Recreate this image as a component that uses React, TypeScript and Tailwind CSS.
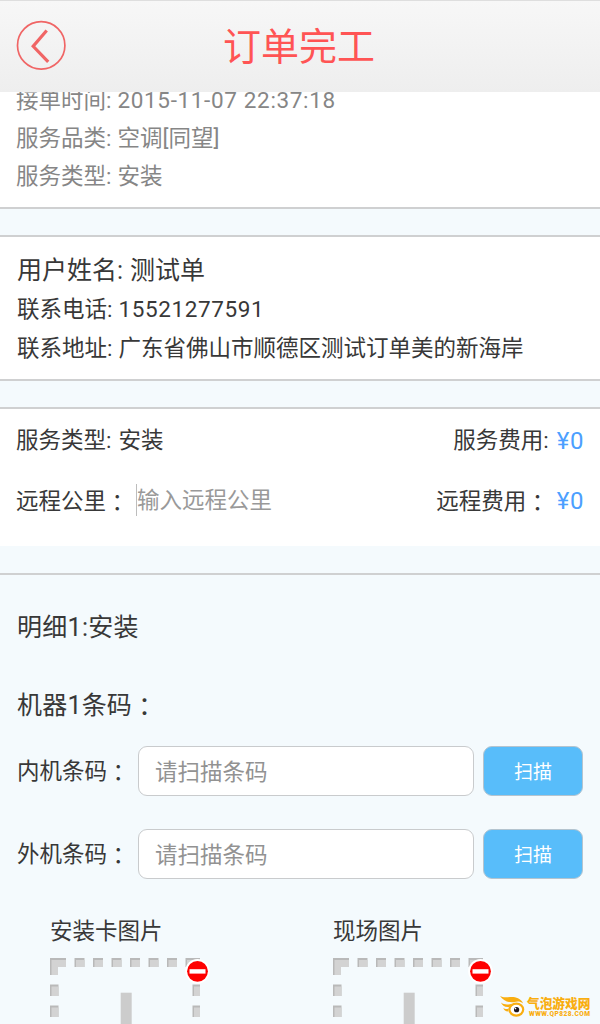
import type { ReactNode } from "react";

interface InfoRowProps {
  label: string;
  value: string;
  className?: string;
  valueClassName?: string;
}

function InfoRow({
  label,
  value,
  className = "h-[38px] text-[22.5px]",
  valueClassName = "",
}: InfoRowProps) {
  return (
    <p className={`flex items-center whitespace-nowrap ${className}`}>
      <span>{label}:</span>
      <span className={`ml-1.5 ${valueClassName}`}>{value}</span>
    </p>
  );
}

// Full-width colon, centred in its cell
function Colon() {
  return (
    <span className="inline-block translate-y-[2px] font-['Noto_Sans_CJK_TC',sans-serif]">：</span>
  );
}

function Header() {
  return (
    <header className="relative z-10 flex h-[92px] shrink-0 items-center justify-center border-t border-[#dedede] bg-linear-to-b from-[#f7f7f7] to-[#eeeeee]">
      <button type="button" aria-label="返回" className="absolute top-[19px] left-4">
        <svg width="51" height="51" viewBox="0 0 51 51" fill="none" stroke="#f06565">
          <circle cx="25.2" cy="25.4" r="23.7" strokeWidth="1.7" />
          <path d="M30.7 10.5 17.2 26.3 32.2 41.8" strokeWidth="3.2" />
        </svg>
      </button>
      <h1 className="pr-0.5 text-[38px] leading-none text-[#ff5454]">订单完工</h1>
    </header>
  );
}

function Price({ children }: { children: ReactNode }) {
  return <span className="text-[24px] tracking-[0.6px] text-[#4c9fff]">{children}</span>;
}

function ScanRow({ label }: { label: string }) {
  return (
    <div className="flex h-[50px] items-center">
      <label className="w-[121px] shrink-0 pb-px text-[22.5px]">
        {label}
        <Colon />
      </label>
      <input
        type="text"
        placeholder="请扫描条码"
        className="h-[50px] w-[337px] rounded-[9px] border border-[#c9cbcd] bg-white px-4 pt-0.5 text-[22.5px] outline-none placeholder:text-[#929292]"
      />
      <button
        type="button"
        className="ml-[9px] h-[50px] w-[100px] rounded-[9px] border border-[#b4c4cf] bg-[#58bdfa] pt-1 text-[19px] text-white"
      >
        扫描
      </button>
    </div>
  );
}

const topDashes = [24.5, 43, 61.5, 80, 98.5, 117];
const sideDashes = [26.5, 47.5];

function Dash({ x, y, w, h }: { x: number; y: number; w: number; h: number }) {
  return (
    <g>
      <rect x={x} y={y} width={w} height={h} fill="#b9b9b9" />
      <rect x={x + 1.5} y={y + 2} width={w - 1.5} height={h - 2} fill="#d3d3d3" />
    </g>
  );
}

function PhotoSlot({ title }: { title: string }) {
  return (
    <div className="w-[283px] shrink-0">
      <p className="h-[34px] text-[22.5px] leading-[34px]">{title}</p>
      <svg className="mt-[10px] block" width="166" height="66" viewBox="0 0 166 66">
        <path d="M0 0H16V9H8V17H0Z" fill="#b9b9b9" />
        <path d="M1.5 2H16V9H8V17H1.5Z" fill="#d3d3d3" />
        {topDashes.map((x) => (
          <Dash key={x} x={x} y={0} w={10} h={9} />
        ))}
        <Dash x={135.5} y={0} w={14.5} h={9} />
        {sideDashes.map((y) => (
          <g key={y}>
            <Dash x={0} y={y} w={8.5} h={11.5} />
            <Dash x={142.5} y={y} w={7.5} h={11.5} />
          </g>
        ))}
        <rect x="70.7" y="34.7" width="11" height="32" fill="#cccccc" />
        <circle cx="147.5" cy="13.3" r="12.3" fill="#ffffff" />
        <circle cx="147.5" cy="13.3" r="10.4" fill="#fe0000" />
        <rect x="139.5" y="11.2" width="16" height="4.4" fill="#ffffff" />
      </svg>
    </div>
  );
}

function Watermark() {
  return (
    <div className="absolute right-[9px] bottom-[6px] flex text-[#f9ae10]">
      <svg width="25" height="23" viewBox="0 0 25 23" fill="none">
        <path
          d="M0 1C5 4 12 .2 18 3.2 21 4.6 22.5 6.5 23 8.5 20 6 17 6.3 14 7.2 7 8 3 5 0 1ZM1 7.5C4 10 8 9.7 12 8.8L9 12C5 12.5 2 10.5 1 7.5ZM3.3 13C5 14.5 7 14 8.6 13.4L8.2 16.5C5.5 16.5 4 15 3.3 13Z"
          fill="#f9ae10"
        />
        <ellipse cx="16.3" cy="14.6" rx="6.9" ry="6" fill="#ffffff" stroke="#f9ae10" strokeWidth="2.2" />
        <circle cx="16.6" cy="14.7" r="2.6" fill="#201a20" />
        <circle cx="15.5" cy="13.6" r=".8" fill="#ffffff" />
      </svg>
      <div className="ml-[2px] w-[64px] pt-px">
        <p className="text-[12.7px] leading-[15px] font-black whitespace-nowrap">气泡游戏网</p>
        <p className="ml-0.5 text-[6.6px] leading-[6px] font-black tracking-[0.45px] whitespace-nowrap">
          WWW.QP828.COM
        </p>
      </div>
    </div>
  );
}

export default function App() {
  return (
    <div className="relative flex h-[1024px] w-[600px] flex-col overflow-hidden bg-[#f4fafd] font-[Roboto,'Noto_Sans_CJK_SC',sans-serif] text-[#383838]">
      <Header />
      <main className="min-h-0 flex-1 overflow-hidden">
        <section className="-mt-[11px] h-[128px] border-b-2 border-[#cfd0d1] bg-white px-4 pt-px text-[#868686]">
          <InfoRow label="接单时间" value="2015-11-07 22:37:18" valueClassName="tracking-[0.65px]" />
          <InfoRow label="服务品类" value="空调[同望]" />
          <InfoRow label="服务类型" value="安装" />
        </section>

        <section className="mt-[26px] h-[146px] border-y-2 border-[#cfd0d1] bg-white px-[17px] pt-[13px]">
          <InfoRow label="用户姓名" value="测试单" className="h-[41px] text-[25px]" valueClassName="pl-px" />
          <InfoRow label="联系电话" value="15521277591" valueClassName="tracking-[0.6px]" />
          <InfoRow label="联系地址" value="广东省佛山市顺德区测试订单美的新海岸" className="h-[40px] text-[22.5px]" />
        </section>

        <section className="mt-[26px] h-[139px] border-t-2 border-[#cfd0d1] bg-white px-4 text-[22.5px]">
          <div className="flex h-[62px] items-center justify-between">
            <InfoRow label="服务类型" value="安装" className="pt-0.5" valueClassName="pl-px" />
            <p className="flex items-center pt-px">
              <span className="mr-2">服务费用:</span>
              <Price>¥0</Price>
            </p>
          </div>
          <div className="flex h-[58px] items-center">
            <label className="w-[120px] shrink-0 pt-px">
              远程公里
              <Colon />
            </label>
            <input
              type="text"
              placeholder="输入远程公里"
              className="h-8 w-[200px] border-l border-[#bdbdbd] pt-0.5 outline-none placeholder:text-[#999999]"
            />
            <p className="ml-auto pt-px">
              远程费用
              <Colon />
              <span className="ml-2">
                <Price>¥0</Price>
              </span>
            </p>
          </div>
        </section>

        <section className="mt-[27px] border-t-2 border-[#cfd0d1] px-[17px]">
          <h2 className="mt-[33px] h-10 text-[25px] leading-10 tracking-[0.3px]">明细1:安装</h2>
          <h3 className="mt-[35px] h-10 text-[25px] leading-10 tracking-[0.2px]">
            机器1条码
            <Colon />
          </h3>
          <div className="mt-[23px] flex flex-col gap-[33px]">
            <ScanRow label="内机条码" />
            <ScanRow label="外机条码" />
          </div>
          <div className="mt-[35px] ml-[33px] flex">
            <PhotoSlot title="安装卡图片" />
            <PhotoSlot title="现场图片" />
          </div>
        </section>
      </main>
      <Watermark />
    </div>
  );
}
